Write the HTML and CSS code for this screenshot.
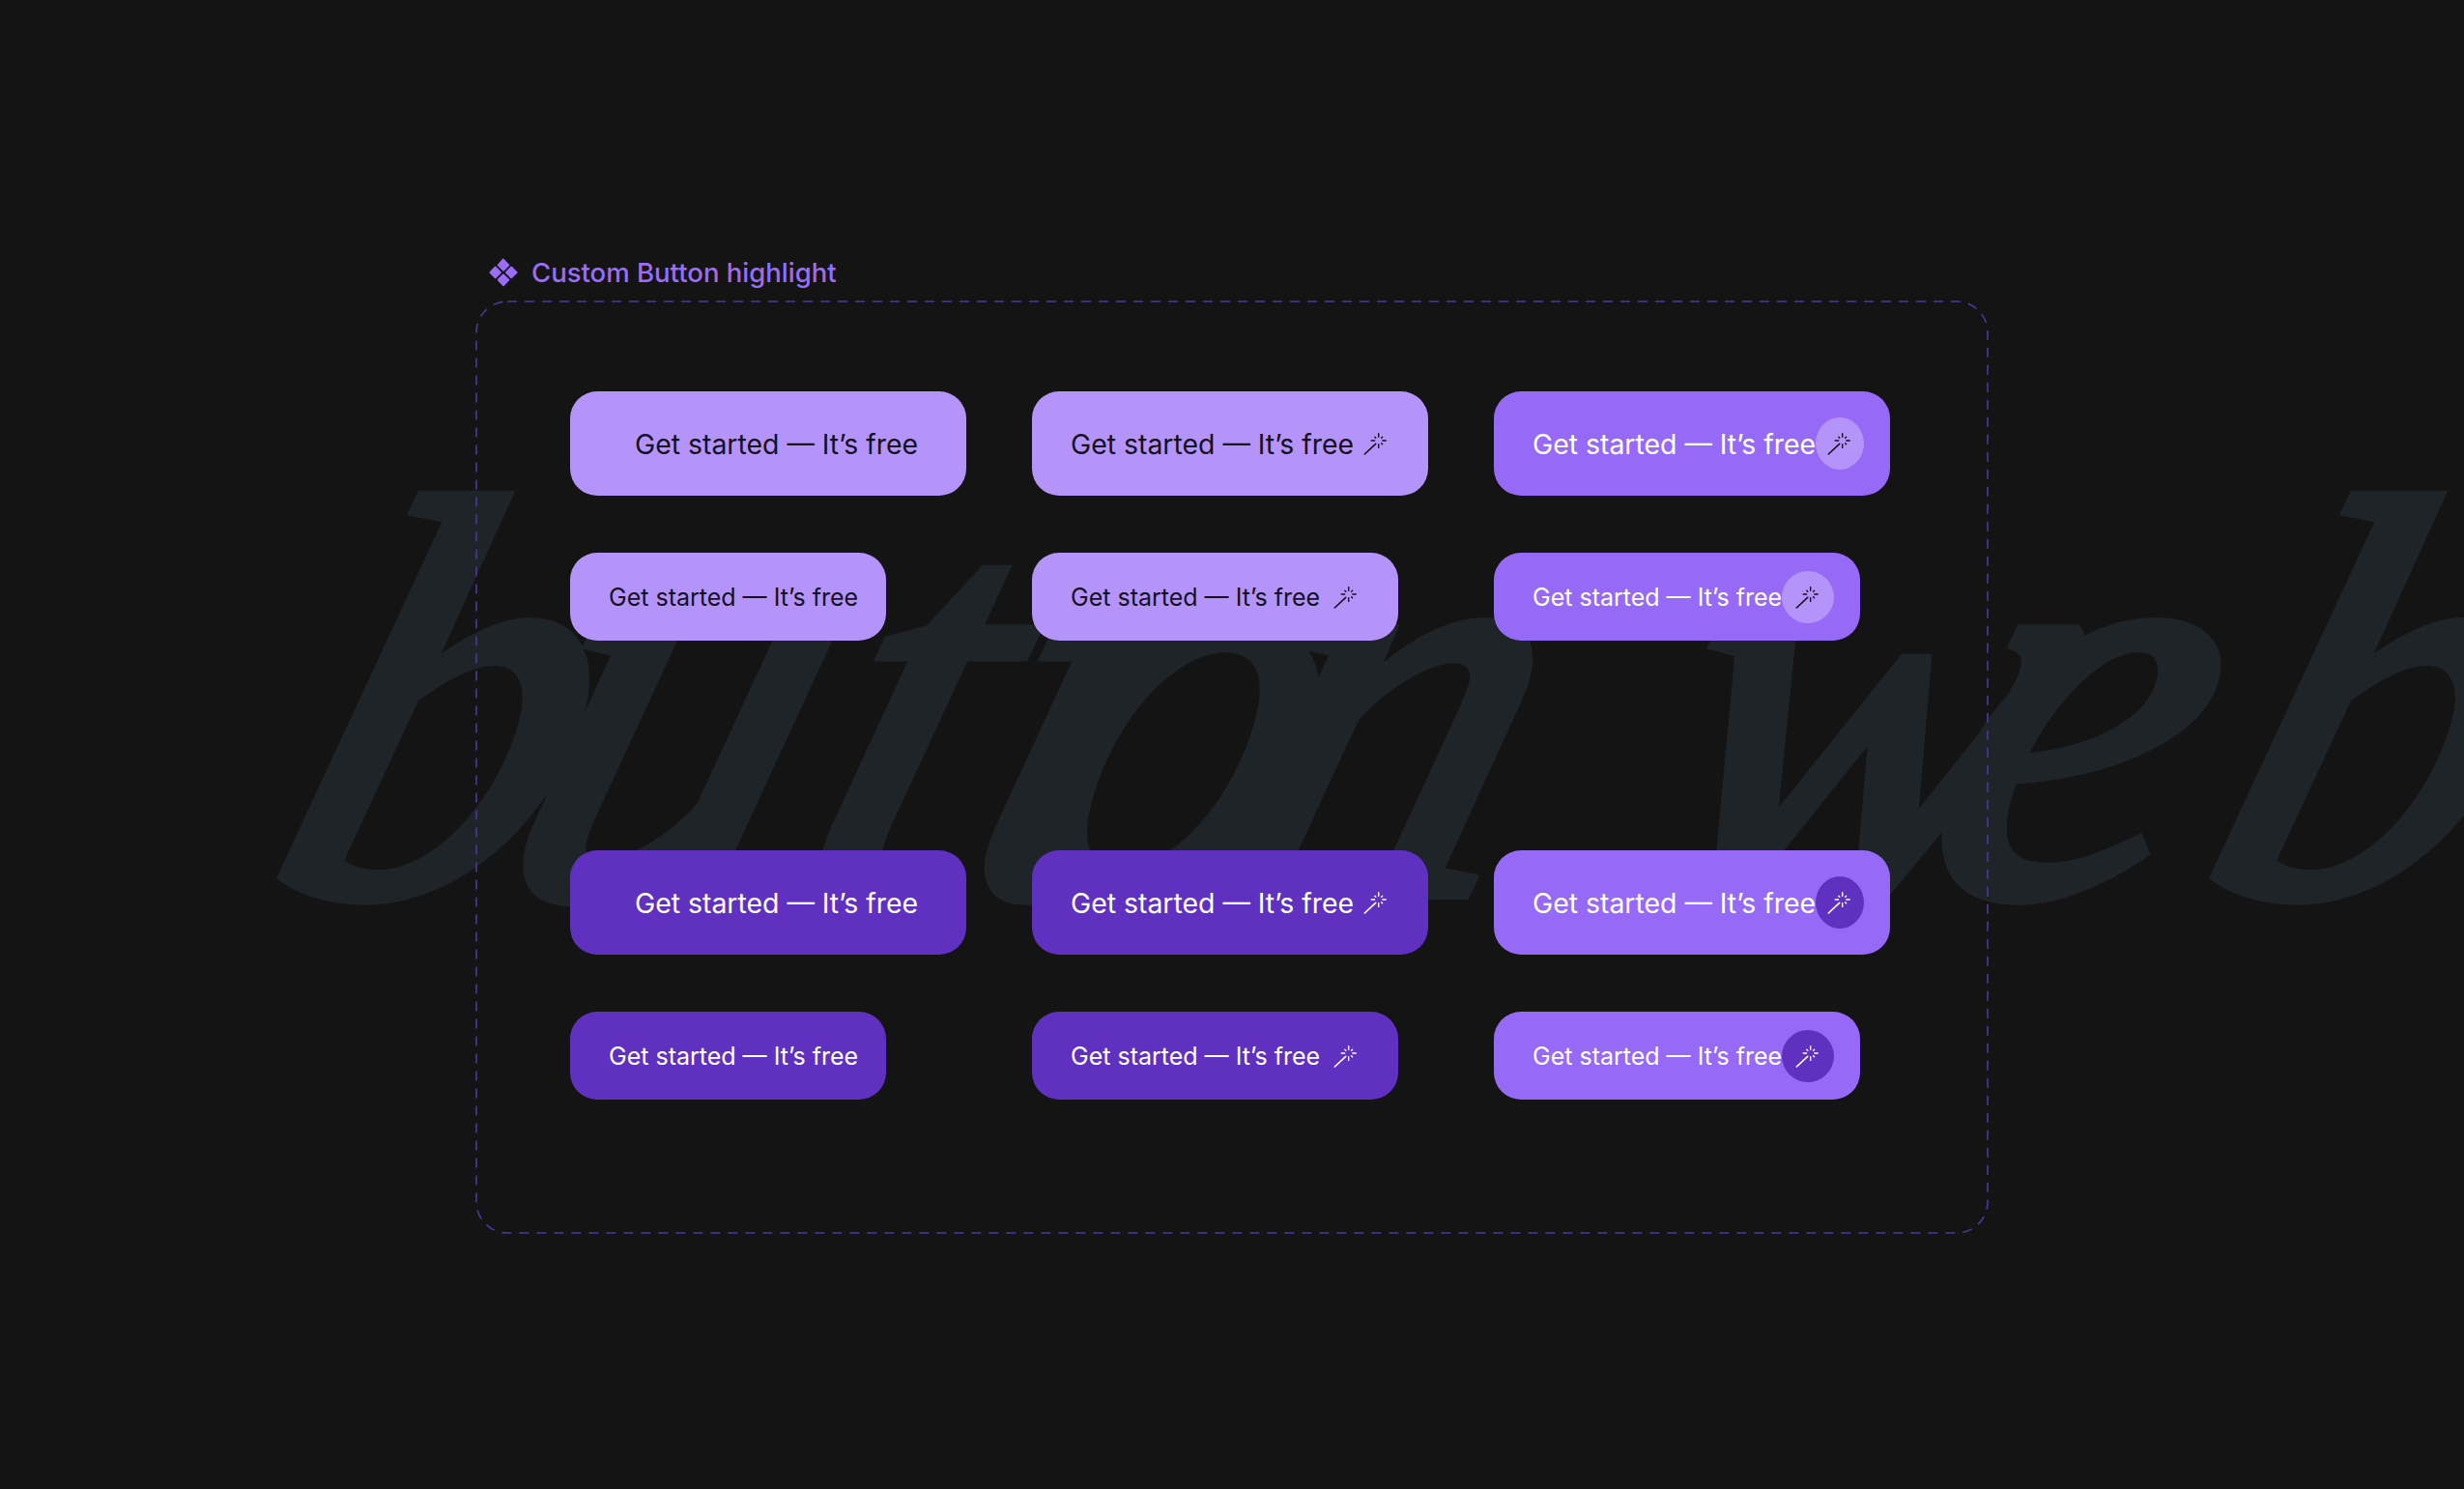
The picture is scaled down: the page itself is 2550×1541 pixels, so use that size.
FILE: index.html
```html
<!DOCTYPE html>
<html lang="en">
<head>
<meta charset="utf-8">
<title>Custom Button highlight</title>
<link rel="stylesheet" href="styles.css">
</head>
<body>
<div class="ghost" aria-hidden="true">
  <span class="gl g1">b</span><span class="gl g2">u</span><span class="gl g3">t</span><span class="gl g4">t</span><span class="gl g5">o</span><span class="gl g6">n</span><span class="gl g7">w</span><span class="gl g8">e</span><span class="gl g9">b</span>
</div>
<svg class="defs" width="0" height="0" aria-hidden="true">
  <symbol id="wand" viewBox="0 0 28 28">
    <path d="M2.3 25 13.7 14.3" fill="none" stroke="currentColor" stroke-width="1.6" stroke-linecap="round"/>
    <path d="M16.7 3.6V7.2M16.7 14.8V18.4M9.2 11H12.6M20.8 11H24.2M19.6 8.2 20.6 7.2M19.6 13.8 20.6 14.8M13.8 8.2 12.8 7.2" fill="none" stroke="currentColor" stroke-width="1.4" stroke-linecap="round"/>
  </symbol>
</svg>
<main class="stage">
  <h1 class="label">
    <svg class="logo" viewBox="0 0 30 30" aria-hidden="true">
      <path d="M15 0.6 21 6.8a.9.9 0 0 1 0 1.3l-5.4 5.4a.9.9 0 0 1-1.2 0L9 8.100a.9.9 0 0 1 0-1.300L14.400.6a.5.5 0 0 1 .6 0Z"/>
      <path d="M15 16.200 21 22a.9.9 0 0 1 0 1.300L15.600 29a.9.9 0 0 1-1.200 0L9 23.300a.9.9 0 0 1 0-1.300L14.400 16.500a.5.5 0 0 1 .6-.3Z"/>
      <path d="M7.300 8.800 12.700 14.400a.9.9 0 0 1 0 1.200L7.300 21a.9.9 0 0 1-1.300 0L.6 15.600a.9.9 0 0 1 0-1.200L6 8.800a.9.9 0 0 1 1.300 0Z"/>
      <path d="M23.800 8.800 29.400 14.400a.9.9 0 0 1 0 1.200L23.800 21a.9.9 0 0 1-1.300 0L17.100 15.600a.9.9 0 0 1 0-1.200L22.500 8.800a.9.9 0 0 1 1.300 0Z"/>
    </svg>
    <span>Custom Button highlight</span>
  </h1>
  <section class="frame">
    <svg class="dash" aria-hidden="true"><rect class="dash-rect" x="1" y="1" rx="32" ry="32"/></svg>
    <div class="group">
      <a class="btn lg wide light center"><span>Get started — It’s free</span><i class="dot"></i></a>
      <a class="btn lg wide light"><span>Get started — It’s free</span><svg class="wand"><use href="#wand"/></svg></a>
      <a class="btn lg wide mid"><span class="txt-w">Get started — It’s free</span><b class="disc disc-light"><svg class="wand"><use href="#wand"/></svg></b></a>
      <a class="btn sm light plain"><span>Get started — It’s free</span><i class="dot"></i></a>
      <a class="btn sm light"><span>Get started — It’s free</span><svg class="wand"><use href="#wand"/></svg></a>
      <a class="btn sm mid"><span>Get started — It’s free</span><b class="disc disc-light"><svg class="wand"><use href="#wand"/></svg></b></a>
    </div>
    <div class="group">
      <a class="btn lg wide dark center"><span>Get started — It’s free</span><i class="dot"></i></a>
      <a class="btn lg wide dark"><span>Get started — It’s free</span><svg class="wand"><use href="#wand"/></svg></a>
      <a class="btn lg wide mid"><span>Get started — It’s free</span><b class="disc disc-dark"><svg class="wand"><use href="#wand"/></svg></b></a>
      <a class="btn sm dark plain"><span>Get started — It’s free</span><i class="dot"></i></a>
      <a class="btn sm dark"><span>Get started — It’s free</span><svg class="wand"><use href="#wand"/></svg></a>
      <a class="btn sm mid"><span>Get started — It’s free</span><b class="disc disc-dark"><svg class="wand"><use href="#wand"/></svg></b></a>
    </div>
  </section>
</main>
</body>
</html>
```
FILE: styles.css
```css
* { box-sizing: border-box; }
html, body { margin: 0; height: 100%; }
body {
  position: relative;
  width: 2550px;
  height: 1541px;
  overflow: hidden;
  background: #141414;
  font-family: Inter, "Liberation Sans", sans-serif;
}
.defs { position: absolute; }

/* decorative script word behind the content */
.ghost { position: absolute; inset: 0; overflow: hidden; }
.gl {
  position: absolute;
  top: 430px;
  font: italic 400 590px/1 "Liberation Serif", serif;
  color: #1e2428;
  -webkit-text-stroke: 14px #1e2428;
  transform: skewX(-16deg);
  transform-origin: 0 100%;
}
.g1 { left: 240px; }
.g2 { left: 480px; }
.g3 { left: 790px; }
.g4 { left: 960px; }
.g5 { left: 1000px; }
.g6 { left: 1220px; }
.g7 { left: 1660px; }
.g8 { left: 1950px; }
.g9 { left: 2240px; }

.stage {
  position: relative;
  padding: 262px 0 0 492px;
}
.label {
  display: flex;
  align-items: center;
  gap: 14px;
  height: 40px;
  margin: 0 0 9px 14px;
  color: #9a6cf8;
  font-size: 27.5px;
  font-weight: 500;
  line-height: 40px;
}
.logo { width: 30px; height: 30px; fill: #9a6cf8; flex: none; }

.frame {
  position: relative;
  width: 1566px;
  height: 966px;
  padding: 94px 0 0 98px;
}
.dash { position: absolute; inset: 0; width: 100%; height: 100%; }
.dash-rect {
  width: 1564px;
  height: 964px;
  fill: none;
  stroke: #4f36a0;
  stroke-width: 1.6;
  stroke-dasharray: 10 8;
}
.group {
  position: relative;
  display: grid;
  grid-template-columns: repeat(3, 410px);
  column-gap: 68px;
  row-gap: 59px;
  justify-items: start;
  margin-bottom: 217px;
}
.btn {
  display: inline-flex;
  align-items: center;
  justify-content: space-between;
  border-radius: 28px;
  color: #fff;
  font-weight: 400;
  white-space: nowrap;
}
.lg { height: 108px; padding: 0 27px 0 40px; font-size: 28.4px; }
.sm { height: 91px; padding: 0 27px 0 40px; font-size: 25px; }
.wide { width: 410px; }
.sm { width: 379px; }
.sm.plain { width: 327px; }
.center { padding-left: 67px; }
.light { background: #b594f9; color: #15101f; }
.mid { background: #9769f7; }
.dark { background: #6031c1; }
.disc {
  display: flex;
  align-items: center;
  justify-content: center;
  width: 54px;
  height: 54px;
  border-radius: 50%;
}
.disc-light { background: #b594f9; color: #15101f; }
.disc-dark { background: #6031c1; color: #fff; }
.wand { width: 28px; height: 28px; flex: none; }
.light > .wand { margin-right: 13px; }
.dark > .wand { margin-right: 13px; }
.dot { width: 2px; height: 2px; border-radius: 50%; background: currentColor; opacity: .7; margin-right: 26px; }
```
